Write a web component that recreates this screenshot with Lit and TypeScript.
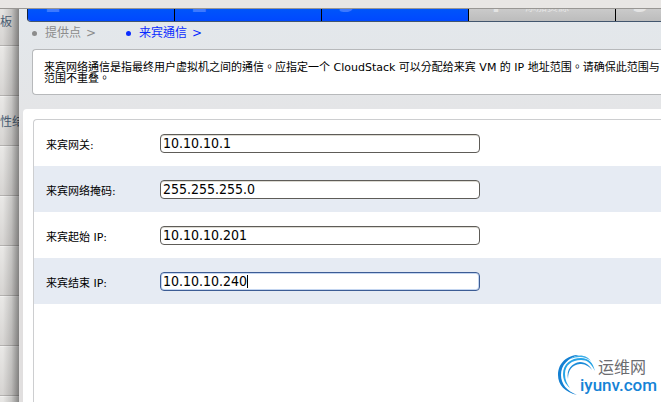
import { LitElement, html, css, svg } from "lit";
import { customElement, state } from "lit/decorators.js";
import { classMap } from "lit/directives/class-map.js";
import { styleMap } from "lit/directives/style-map.js";

interface Field {
  id: string;
  label: string;
  value: string;
}

@customElement("brand-mark")
export class BrandMark extends LitElement {
  static styles = css`
    :host {
      display: block;
      position: relative;
      width: 100px;
      height: 44px;
      font-family: Roboto, "Noto Sans CJK SC", sans-serif;
      white-space: nowrap;
    }
    .swirl {
      display: block;
      width: 40px;
      height: 44px;
    }
    .names {
      position: absolute;
      top: 4px;
      left: 22px;
    }
    .cn {
      padding-left: 18px;
      font-size: 16px;
      line-height: 18px;
      color: #6b6c70;
    }
    .en {
      font-size: 17px;
      line-height: 16px;
      font-weight: 500;
      color: #1583d6;
    }
  `;

  render() {
    return html`
      <svg class="swirl" viewBox="0 0 40 44" aria-hidden="true">
        ${svg`
          <path d="M19 40C7 37 0 30 0 20C0 8 9 0 21 0C10 3 3 10 3 20C3 29 9 36 19 40Z" fill="#1480d2"/>
          <path d="M12 33C7 29 5 24 5 19C5 9 13 3 23 3C31 3 35 8 37 16C33 8 29 5 23 5C14 5 7 10 7 19C7 25 9 29 12 33Z" fill="#27a4e6"/>
          <path d="M10 24C8 14 14 8 22 7C28 7 32 11 34 15C30 10 26 9 22 9C14 10 10 15 10 24Z" fill="#1b8bd8"/>
          <path d="M12 4C20 -2 29 0 33 6C27 1 20 1 12 4Z" fill="#3baee9"/>
        `}
      </svg>
      <div class="names">
        <div class="cn">运维网</div>
        <div class="en">iyunv.com</div>
      </div>
    `;
  }
}

@customElement("app-root")
export class AppRoot extends LitElement {
  static styles = css`
    * {
      box-sizing: border-box;
    }
    :host {
      display: flex;
      flex-direction: column;
      min-height: 100vh;
      overflow: hidden;
      position: relative;
      background: #fff;
      color: #000;
      font-family: "DejaVu Sans", "Noto Sans CJK TC", sans-serif;
      font-size: 11px;
    }
    .toolbar {
      height: 9px;
      background: #e8e6e4;
      border-bottom: 1px solid #989693;
    }
    .body {
      flex: 1;
      display: grid;
      grid-template-columns: 19px minmax(0, 1fr);
    }
    .side {
      position: relative;
      overflow: hidden;
      background: #dddbd9;
    }
    .side::after {
      content: "";
      position: absolute;
      inset: 0;
      background: linear-gradient(90deg, rgba(0, 0, 0, 0) 15%, rgba(0, 0, 0, 0.14) 60%, rgba(0, 0, 0, 0.42));
      pointer-events: none;
    }
    .side ul {
      position: absolute;
      top: -13px;
      left: 0;
      right: 0;
      margin: 0;
      padding: 0;
      list-style: none;
    }
    .side li {
      height: 50px;
      line-height: 50px;
      border-top: 1px solid #f2f1f0;
      border-bottom: 1px solid #b4b2b0;
      background: linear-gradient(#e9e8e6, #d6d4d2);
      overflow: hidden;
    }
    .side a {
      display: block;
      color: #4b5f76;
      font-size: 12px;
      text-decoration: none;
      white-space: nowrap;
    }
    .dialog {
      display: flex;
      flex-direction: column;
      padding-left: 4px;
      background: linear-gradient(#e3e8ec, #e4e5e7 100px, #e1dfdf 130px);
    }
    .steps {
      display: flex;
      height: 13px;
      margin: 0 0 0 4px;
      padding: 0;
      list-style: none;
      overflow: hidden;
      background: #c6c6c6;
      border-bottom: 1px solid #42566e;
      border-left: 1px solid #12233f;
      border-bottom-left-radius: 4px;
    }
    .step {
      flex: 0 0 147px;
      display: flex;
      align-items: flex-end;
      gap: 22px;
      padding: 0 0 8px 16px;
      border-right: 1px solid #000;
      background: linear-gradient(#cacaca, #bcbcbc);
      color: #e4e4e4;
    }
    .step.done {
      background: linear-gradient(#0055fa, #0048ff);
      color: #3d79ff;
    }
    .num {
      width: 18px;
      font-size: 24px;
      font-weight: bold;
      line-height: 18px;
    }
    .caption {
      line-height: 10px;
    }
    .crumbs {
      display: flex;
      gap: 30px;
      margin: 3px 0 0 9px;
      padding: 0;
      list-style: none;
      font-size: 12px;
      line-height: 16px;
      color: #8c8c8c;
    }
    .crumbs li {
      display: flex;
      align-items: center;
      gap: 5px;
      white-space: nowrap;
    }
    .crumbs li::before {
      content: "";
      width: 5px;
      height: 5px;
      margin-right: 3px;
      border-radius: 50%;
      background: currentColor;
    }
    .crumbs .current {
      color: #0a2cff;
    }
    .intro {
      height: 46px;
      margin: 8px 0 0 9px;
      padding: 12px 0 0 11px;
      border: 1px solid #b7b9bb;
      border-right: 0;
      border-radius: 4px 0 0 4px;
      background: #fff;
      line-height: 11px;
      white-space: nowrap;
      overflow: hidden;
    }
    .panel {
      flex: 1;
      display: flex;
      margin-top: 14px;
      padding: 10px 0 0 10px;
      border-top-left-radius: 4px;
      background: #fff;
    }
    .form {
      flex: 1;
      border: solid #cdced0;
      border-width: 1px 0 0 1px;
      border-top-left-radius: 4px;
    }
    .row {
      display: flex;
      align-items: center;
      height: 46px;
      padding-left: 12px;
    }
    .row:nth-child(even) {
      background: #e6ebf3;
    }
    .row label {
      width: 114px;
      padding-top: 2px;
      white-space: nowrap;
    }
    .box {
      position: relative;
      display: flex;
      width: 320px;
    }
    .box input {
      width: 100%;
      height: 19px;
      padding: 0 2px;
      border: 1px solid #5e5c58;
      border-radius: 4px;
      outline: 0;
      background: #fff;
      box-shadow: inset 0 1px 0 #dcdad2;
      color: #000;
      caret-color: transparent;
      font: 14px "DejaVu Sans Condensed", "DejaVu Sans", sans-serif;
    }
    .box input.active {
      border-color: #3c5c94;
      box-shadow: inset 0 0 0 1px #c3d5f0;
    }
    .caret {
      position: absolute;
      top: 3px;
      width: 1px;
      height: 13px;
      background: #000;
      pointer-events: none;
    }
    brand-mark {
      position: absolute;
      right: 3px;
      bottom: 3px;
    }
  `;

  @state() private focused = "end";
  @state() private caretX = 0;

  private menu = ["板", "", "性结", "", "", "", "", "", ""];

  private steps = [
    { caption: "", done: true },
    { caption: "", done: true },
    { caption: "", done: true },
    { caption: "添加资源", done: false },
    { caption: "", done: false },
  ];

  private fields: Field[] = [
    { id: "gateway", label: "来宾网关:", value: "10.10.10.1" },
    { id: "netmask", label: "来宾网络掩码:", value: "255.255.255.0" },
    { id: "start", label: "来宾起始 IP:", value: "10.10.10.201" },
    { id: "end", label: "来宾结束 IP:", value: "10.10.10.240" },
  ];

  private placeCaret(input: HTMLInputElement) {
    const ctx = document.createElement("canvas").getContext("2d");
    if (!ctx) return;
    ctx.font = getComputedStyle(input).font;
    const typed = input.value.slice(0, input.selectionStart ?? input.value.length);
    this.caretX = Math.round(ctx.measureText(typed).width) + 3;
  }

  firstUpdated() {
    const input = this.renderRoot.querySelector<HTMLInputElement>("#end");
    if (!input) return;
    input.focus();
    input.setSelectionRange(input.value.length, input.value.length);
    this.placeCaret(input);
  }

  private onCaretMove(e: Event) {
    const input = e.target as HTMLInputElement;
    this.focused = input.id;
    this.placeCaret(input);
  }

  render() {
    return html`
      <div class="toolbar"></div>
      <div class="body">
        <nav class="side">
          <ul>
            ${this.menu.map((m) => html`<li>${m ? html`<a href="#">${m}</a>` : ""}</li>`)}
          </ul>
        </nav>
        <main class="dialog">
          <ol class="steps">
            ${this.steps.map(
              (s, i) => html`<li class=${classMap({ step: true, done: s.done })}>
                <span class="num">${i + 1}</span><span class="caption">${s.caption}</span>
              </li>`
            )}
          </ol>
          <ul class="crumbs">
            <li><span>提供点</span><span>&gt;</span></li>
            <li class="current"><span>来宾通信</span><span>&gt;</span></li>
          </ul>
          <div class="intro">
            来宾网络通信是指最终用户虚拟机之间的通信。应指定一个 CloudStack 可以分配给来宾 VM 的 IP 地址范围。请确保此范围与<br />范围不重叠。
          </div>
          <section class="panel">
            <form class="form">
              ${this.fields.map(
                (f) => html`<div class="row">
                  <label for=${f.id}>${f.label}</label>
                  <div class="box">
                    <input
                      id=${f.id}
                      type="text"
                      class=${classMap({ active: this.focused === f.id })}
                      .value=${f.value}
                      @focus=${this.onCaretMove}
                      @input=${this.onCaretMove}
                      @keyup=${this.onCaretMove}
                      @click=${this.onCaretMove}
                    />
                    ${this.focused === f.id
                      ? html`<span class="caret" style=${styleMap({ left: `${this.caretX}px` })}></span>`
                      : ""}
                  </div>
                </div>`
              )}
            </form>
          </section>
        </main>
      </div>
      <brand-mark></brand-mark>
    `;
  }
}
